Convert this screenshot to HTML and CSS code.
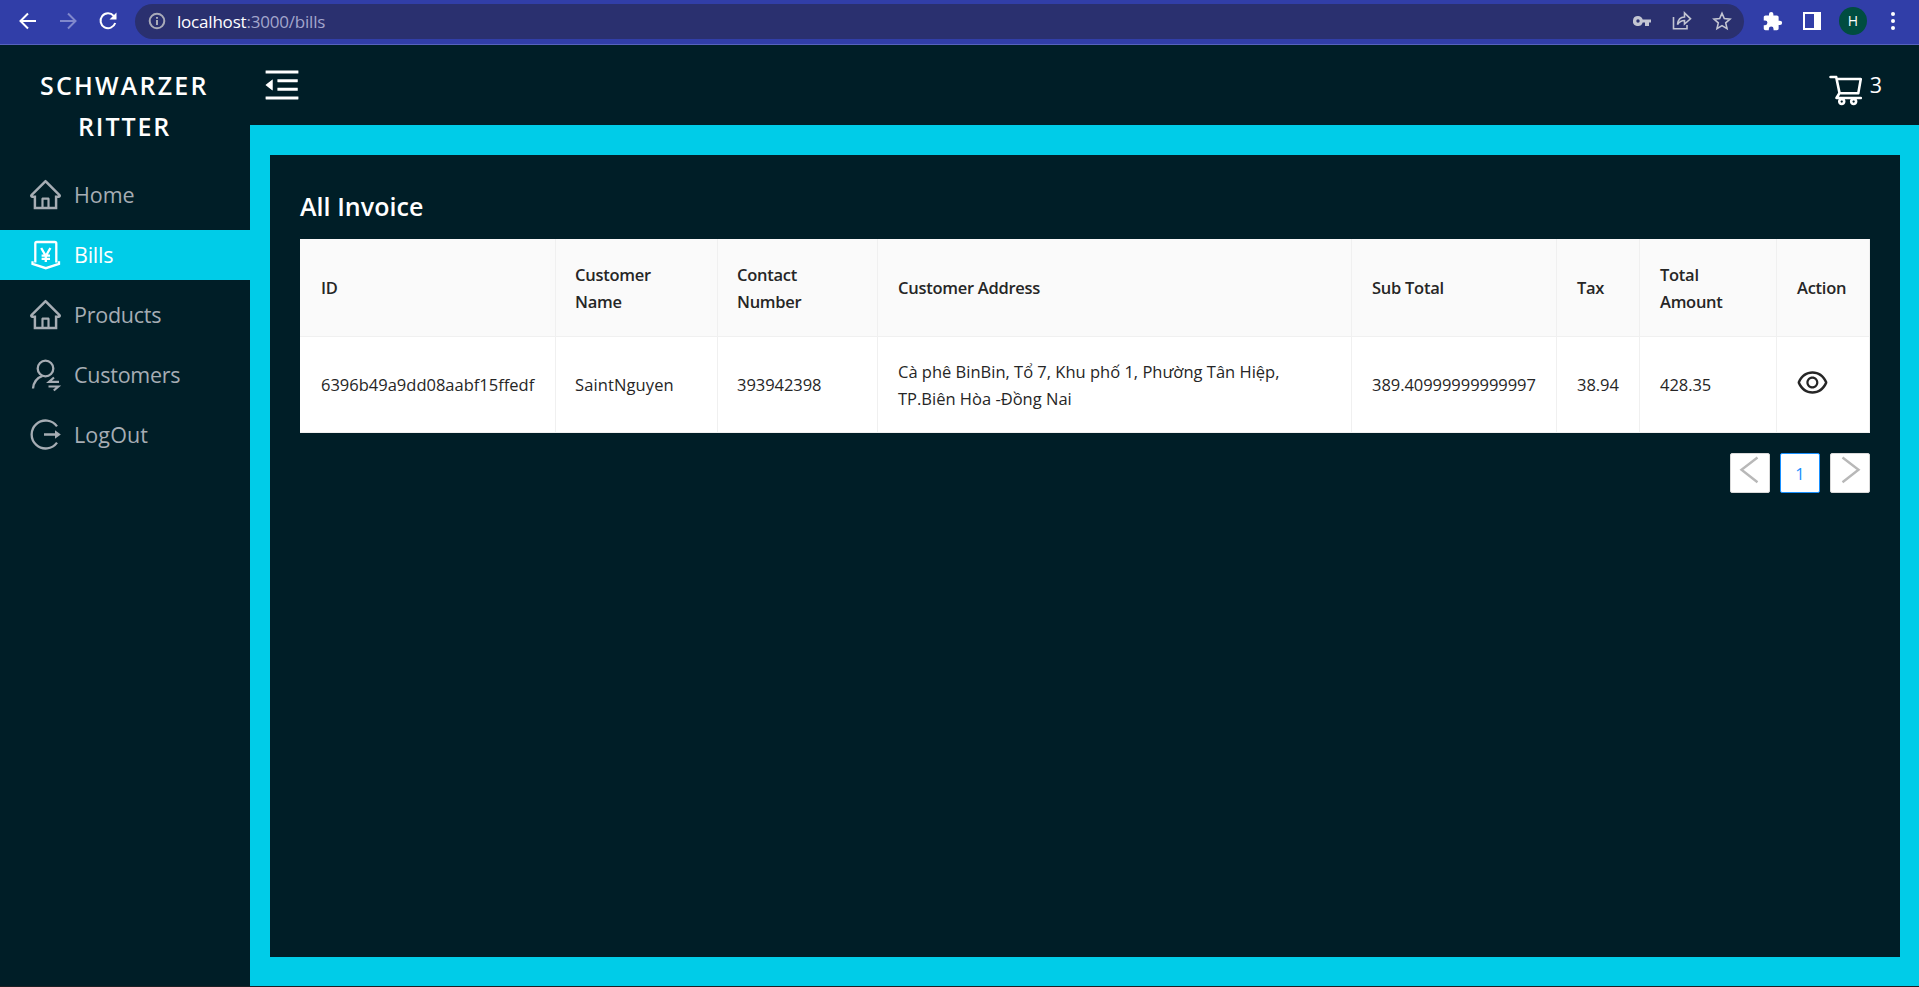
FILE: index.html
```html
<!DOCTYPE html>
<html lang="en">
<head>
<meta charset="utf-8">
<title>Bills</title>
<link rel="stylesheet" href="styles.css">
</head>
<body>
<svg class="defs" width="0" height="0">
  <symbol id="home" viewBox="0 0 1024 1024"><path d="M946.5 505L560.1 118.8l-25.9-25.9a31.5 31.5 0 00-44.4 0L77.5 505a63.9 63.9 0 00-18.8 46c.4 35.2 29.7 63.3 64.9 63.3h42.5V940h691.8V614.3h43.4c17.1 0 33.2-6.7 45.3-18.8a63.6 63.6 0 0018.7-45.3c0-17-6.7-33.1-18.8-45.2zM568 868H456V664h112v204zm217.9-325.7V868H632V640c0-22.1-17.9-40-40-40H432c-22.1 0-40 17.9-40 40v228H238.1V542.3h-96l370-369.7 23.1 23.1L882 542.3h-96.1z"/></symbol>
</svg>
<header class="browser">
  <svg class="nav-icon" viewBox="0 0 20 20"><path d="M18 10H3M10 2.5L2.5 10l7.500 7.500"/></svg>
  <svg class="nav-icon dim" viewBox="0 0 20 20"><path d="M2 10h15M10 2.500l7.500 7.500-7.500 7.500"/></svg>
  <svg class="nav-icon" viewBox="0 0 20 20"><path d="M17.200 12a7.500 7.500 0 1 1-1.500-7.200L17.500 7"/><path class="solid" d="M18.500 1.500v7h-7z"/></svg>
  <div class="omnibox">
    <svg class="info" viewBox="0 0 18 18"><circle cx="9" cy="9" r="7.300"/><path d="M9 8v5M9 5v1.700"/></svg>
    <span class="url"><b>localhost</b>:3000/bills</span>
    <svg class="key" viewBox="0 0 18 12"><path d="M5 1a5 5 0 1 0 4.700 6.500H12V11h4V7.500h2v-3H9.700A5 5 0 0 0 5 1zm0 3.300a1.700 1.700 0 1 1 0 3.400 1.700 1.700 0 0 1 0-3.400z"/></svg>
    <svg class="line-icon" viewBox="0 0 20 20"><path d="M1.500 6v11.800H15V14M5.500 13.500c.5-5 3-7.500 7-7.500V2l6 5.800-6 5.200V9.500c-3 0-5 1-7 4z"/></svg>
    <svg class="line-icon" viewBox="0 0 20 20"><path d="M10 2.300l2.300 5.300 5.700.5-4.300 3.800 1.300 5.700-5-3-5 3 1.300-5.700L2 8.100l5.700-.5z"/></svg>
  </div>
  <svg class="ext" viewBox="0 0 24 24"><path d="M20.500 11H19V7c0-1.100-.9-2-2-2h-4V3.500a2.500 2.500 0 0 0-5 0V5H4c-1.100 0-2 .9-2 2v3.800h1.500a2.700 2.700 0 0 1 0 5.400H2V20c0 1.100.9 2 2 2h3.800v-1.500a2.700 2.700 0 0 1 5.400 0V22H17c1.100 0 2-.9 2-2v-4h1.500a2.500 2.500 0 0 0 0-5z"/></svg>
  <span class="side-panel"></span>
  <span class="avatar">H</span>
  <span class="dots"><i></i><i></i><i></i></span>
</header>
<div class="app">
  <aside class="sider">
    <h1 class="logo"><span>SCHWARZER</span><span class="second">RITTER</span></h1>
    <nav class="menu">
      <a class="item"><svg class="icon"><use href="#home"/></svg><span class="t-home">Home</span></a>
      <a class="item active"><svg class="icon stroke" viewBox="0 0 35 35"><path d="M7.300 25.500V6.500q0-1.500 1.500-1.500h18q1.500 0 1.500 1.500v19M4.500 24.300v2.500L17.800 31.200 31 26.800v-2.500M13.200 11l4.600 8 4.600-8M13.600 18.700H22M13.600 21.800H22M17.800 18.500V25"/></svg><span class="t-bills">Bills</span></a>
      <a class="item"><svg class="icon"><use href="#home"/></svg><span class="t-products">Products</span></a>
      <a class="item"><svg class="icon stroke" viewBox="0 0 35 35"><circle cx="17.500" cy="11.500" r="7.800"/><path d="M5 31.500c.5-6 3.500-10.500 9.500-12.700"/><path class="thin" d="M31 24.800H21l5-4.300M20.500 29.500h9.800l-4.500 4"/></svg><span class="t-customers">Customers</span></a>
      <a class="item"><svg class="icon stroke" viewBox="0 0 35 35"><path d="M29 9.300a14 14 0 1 0 0 16.400M16 17.500h13"/><path class="fill" d="M27 13.200v8.600l5.800-4.300z"/></svg><span class="t-logout">LogOut</span></a>
    </nav>
  </aside>
  <div class="main">
    <header class="topbar">
      <svg class="fold" viewBox="0 0 1024 1024"><path d="M408 442h480c4.400 0 8-3.600 8-8v-56c0-4.400-3.600-8-8-8H408c-4.400 0-8 3.600-8 8v56c0 4.400 3.600 8 8 8zm-8 204c0 4.400 3.600 8 8 8h480c4.400 0 8-3.600 8-8v-56c0-4.400-3.600-8-8-8H408c-4.400 0-8 3.600-8 8v56zm504-486H120c-4.400 0-8 3.600-8 8v56c0 4.400 3.600 8 8 8h784c4.400 0 8-3.600 8-8v-56c0-4.400-3.600-8-8-8zm0 632H120c-4.400 0-8 3.600-8 8v56c0 4.400 3.600 8 8 8h784c4.400 0 8-3.600 8-8v-56c0-4.400-3.600-8-8-8zM115.400 518.900L271.700 642c5.800 4.600 14.400.5 14.400-6.900V388.900c0-7.400-8.500-11.500-14.400-6.900L115.400 505.100a8.740 8.740 0 000 13.800z"/></svg>
      <div class="cart">
        <svg viewBox="0 0 1024 1024"><path d="M922.9 701.9H327.4l29.9-60.9 496.8-.9c16.8 0 31.2-12 34.2-28.600l68.800-385.100c1.800-10.100-.9-20.500-7.500-28.400a34.990 34.990 0 00-26.600-12.500l-632-2.100-5.400-25.400c-3.400-16.200-18-28-34.600-28H96.500a35.300 35.300 0 100 70.600h125.900L246 312.800l58.100 281.300-74.800 122.100a34.960 34.960 0 00-3 36.800c6 11.900 18.100 19.400 31.500 19.400h62.800a102.430 102.430 0 00-20.600 61.700c0 56.600 46 102.600 102.600 102.600s102.600-46 102.600-102.600c0-22.300-7.400-44-20.600-61.700h161.100a102.430 102.430 0 00-20.600 61.700c0 56.600 46 102.600 102.600 102.600s102.600-46 102.600-102.600c0-22.300-7.400-44-20.600-61.700H923c19.400 0 35.300-15.800 35.300-35.300a35.420 35.420 0 00-35.400-35.200zM305.700 253l575.800 1.900-56.400 315.800-452.300.8L305.700 253zm96.900 612.700c-17.400 0-31.600-14.200-31.600-31.600 0-17.400 14.200-31.600 31.600-31.600s31.600 14.200 31.600 31.600a31.600 31.600 0 01-31.600 31.600zm325.100 0c-17.400 0-31.600-14.200-31.600-31.600 0-17.400 14.200-31.600 31.600-31.600s31.600 14.200 31.600 31.600a31.600 31.600 0 01-31.600 31.600z"/></svg>
        <span>3</span>
      </div>
    </header>
    <main class="content">
      <h2 class="title">All Invoice</h2>
      <table class="invoices">
        <colgroup><col class="c-id"><col class="c-name"><col class="c-contact"><col class="c-address"><col class="c-sub"><col class="c-tax"><col class="c-total"><col class="c-action"></colgroup>
        <thead><tr><th>ID</th><th>Customer<br>Name</th><th>Contact<br>Number</th><th>Customer Address</th><th>Sub Total</th><th>Tax</th><th>Total<br>Amount</th><th>Action</th></tr></thead>
        <tbody><tr><td>6396b49a9dd08aabf15ffedf</td><td class="name">SaintNguyen</td><td class="num">393942398</td><td class="address">Cà phê BinBin, Tổ 7, Khu phố 1, Phường Tân Hiệp,<br>TP.Biên Hòa -Đồng Nai</td><td class="num">389.40999999999997</td><td class="num">38.94</td><td class="num">428.35</td><td><svg class="eye" viewBox="0 0 1024 1024"><path d="M942.2 486.2C847.4 286.5 704.1 186 512 186c-192.2 0-335.400 100.500-430.200 300.300a60.300 60.300 0 000 51.500C176.600 737.500 319.900 838 512 838c192.200 0 335.400-100.500 430.200-300.300 7.700-16.200 7.700-35 0-51.500zM512 766c-161.300 0-279.400-81.800-362.700-254C232.600 339.800 350.700 258 512 258c161.300 0 279.400 81.800 362.700 254C791.500 684.200 673.400 766 512 766zm-4-430c-97.200 0-176 78.800-176 176s78.800 176 176 176 176-78.800 176-176-78.800-176-176-176zm0 288c-61.900 0-112-50.100-112-112s50.100-112 112-112 112 50.100 112 112-50.100 112-112 112z"/></svg></td></tr></tbody>
      </table>
      <div class="pagination">
        <span class="page"><svg viewBox="0 0 40 40"><path d="M27.500 4.500L11.500 16.700l16 12.500"/></svg></span>
        <span class="page current">1</span>
        <span class="page"><svg viewBox="0 0 40 40"><path d="M12.500 4.500l16 12.200-16 12.500"/></svg></span>
      </div>
    </main>
  </div>
</div>
</body>
</html>
```
FILE: styles.css
```css
* { box-sizing: border-box; }
body {
  margin: 0;
  height: 987px;
  display: flex;
  flex-direction: column;
  overflow: hidden;
  background: #001e27;
  border-bottom: 1px solid #1c2024;
  font-family: "Open Sans", "Noto Sans", sans-serif;
}
.defs { position: absolute; }
svg { display: block; flex: none; fill: currentColor; }

.browser {
  height: 45px;
  flex: none;
  display: flex;
  align-items: center;
  padding: 0 23px 2px 18px;
  background: #313ea8;
  border-bottom: 1px solid #5662be;
  color: #fff;
}
.nav-icon { width: 20px; height: 20px; margin-right: 20px; fill: none; stroke: #fff; stroke-width: 2; }
.nav-icon .solid { fill: #fff; stroke: none; }
.dim { stroke: #8088cc; }
.omnibox {
  flex: 1;
  height: 35px;
  margin-left: -3px;
  margin-right: 18px;
  padding: 0 12px 0 13px;
  display: flex;
  align-items: center;
  border-radius: 18px;
  background: #2a306f;
  color: #c3c5d2;
}
.info { width: 18px; height: 18px; margin-right: 11px; fill: none; stroke: #a9abb9; stroke-width: 2; }
.url { flex: 1; font-size: 17px; letter-spacing: -.2px; color: #a3a6cc; }
.url b { font-weight: 400; color: #fff; }
.key { width: 18px; height: 12px; margin-right: 21px; }
.line-icon { width: 20px; height: 20px; margin-right: 20px; fill: none; stroke: currentColor; stroke-width: 1.6; }
.line-icon:last-child { margin-right: 0; }
.ext { width: 21px; height: 21px; margin-right: 20px; }
.side-panel { width: 18px; height: 18px; margin-right: 18px; border: 2px solid #fff; border-right-width: 7px; }
.avatar {
  width: 28px; height: 28px; margin-right: 22px;
  border-radius: 50%; background: #004d40;
  font-size: 14px; line-height: 28px; text-align: center;
}
.dots { width: 7px; display: flex; flex-direction: column; align-items: center; gap: 3px; }
.dots i { width: 4px; height: 4px; border-radius: 50%; background: #fff; }

.app { flex: 1; display: flex; }
.sider { width: 250px; flex: none; }
.logo {
  margin: 0;
  padding: 20px 0 0 40px;
  display: flex;
  flex-direction: column;
  font-size: 25px;
  font-weight: 600;
  line-height: 41px;
  letter-spacing: 2.200px;
  color: #fff;
}
.second { padding-left: 38px; letter-spacing: 1.900px; }
.menu { padding-top: 23px; display: flex; flex-direction: column; gap: 10px; }
.item {
  height: 50px;
  padding: 0 0 1px 28px;
  display: flex;
  align-items: center;
  gap: 11px;
  font-size: 21.500px;
  letter-spacing: -.25px;
  color: #a6adb4;
}
.item .t-home { letter-spacing: -.05px; }
.item .t-logout { letter-spacing: .1px; }
.active { background: #00cce8; color: #fff; }
.icon { width: 35px; height: 35px; margin-top: -1px; }
.stroke { fill: none; stroke: currentColor; stroke-width: 2.300; }
.stroke .fill { fill: currentColor; stroke: none; }
.stroke .thin { stroke-width: 2.200; }

.main { flex: 1; display: flex; flex-direction: column; background: #00cce8; }
.topbar {
  height: 80px;
  display: flex;
  justify-content: space-between;
  align-items: flex-start;
  padding: 18px 37px 0 10px;
  background: #001e27;
  color: #fff;
}
.fold { width: 42px; height: 42px; margin: 1px 0 0 1px; }
.cart { display: flex; gap: 5px; }
.cart svg { width: 37.500px; height: 37.500px; margin-top: 8px; }
.cart span { font-size: 21.500px; line-height: 44px; }
.content { flex: 1; margin: 30px 19px 29px 20px; padding: 30px; background: #001e27; }
.title { margin: 0; height: 54px; font-size: 25px; font-weight: 600; line-height: 43px; letter-spacing: .05px; color: #fff; }

.invoices {
  width: 1570px;
  table-layout: fixed;
  border-collapse: separate;
  border-spacing: 0;
  background: #fff;
  font-size: 16.500px;
  line-height: 27px;
  letter-spacing: 0;
  color: #262626;
}
.c-id { width: 256px; } .c-name { width: 162px; } .c-contact { width: 160px; } .c-address { width: 474px; }
.c-sub { width: 205px; } .c-tax { width: 83px; } .c-total { width: 137px; } .c-action { width: 93px; }
th, td { padding: 0 0 0 20px; text-align: left; border-right: 1px solid #f0f0f0; border-bottom: 1px solid #f0f0f0; white-space: nowrap; }
th { height: 98px; font-weight: 600; letter-spacing: -.27px; background: #fafafa; }
td { height: 96px; }
td.name { letter-spacing: .12px; }
td.num { letter-spacing: -.05px; }
th:first-child, td:first-child { padding-left: 21px; }
th:nth-child(2), td:nth-child(2), th:nth-child(3), td:nth-child(3) { padding-left: 19px; }
.eye { width: 35px; height: 35px; margin: -5px 0 0 -2px; }
.pagination { display: flex; justify-content: flex-end; gap: 10px; padding-top: 20px; }
.page { width: 40px; height: 40px; border: 1px solid #d9d9d9; border-radius: 2px; background: #fff; }
.page svg { width: 40px; height: 40px; margin: -1px; fill: none; stroke: #b8b8b8; stroke-width: 2.400; }
.current { border-color: #1890ff; color: #1890ff; font-size: 16.500px; line-height: 39px; text-align: center; }
```
